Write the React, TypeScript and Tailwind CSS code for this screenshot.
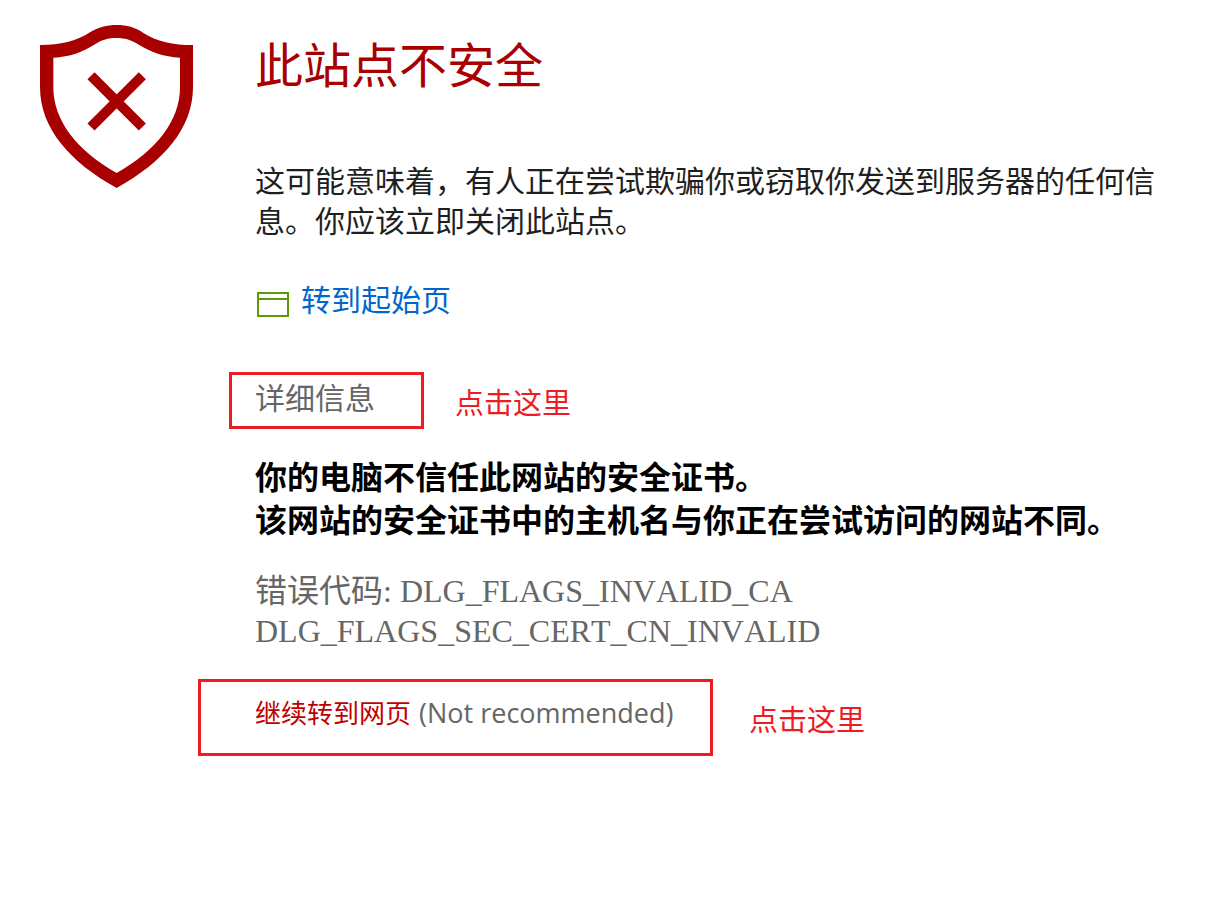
import React from "react";

function ShieldIcon() {
  return (
    <svg viewBox="0 0 459 489" className="h-auto w-[153px]" aria-hidden="true">
      <path
        fill="#a80000"
        fillRule="evenodd"
        d="M0 60C62 60 108 49 150 22C175 7 200 0 230 0C260 0 286 7 309 23C350 50 400 60 459 60V187C459 310 370 412 230 489C90 412 0 310 0 187ZM40 98V187C40 288 112 378 230 444C348 378 420 288 420 187V98C372 96 332 82 294 58C274 45 255 39 230 39C205 39 186 44 165 58C128 82 90 96 40 98Z"
      />
      <path d="M153 152L307 306M307 152L153 306" stroke="#a80000" strokeWidth="30" fill="none" />
    </svg>
  );
}

function WindowIcon() {
  return (
    <svg viewBox="0 0 32 26" className="mt-[11px] h-[26px] w-8" fill="none" stroke="#5c9a0c" aria-hidden="true">
      <path strokeWidth="2" d="M1 2H31V25H1Z" />
      <path strokeWidth="2" d="M1 8H31" />
    </svg>
  );
}

function Hint({ children }: { children: React.ReactNode }) {
  return <p className="text-[29px] leading-10 text-[#ed1c24]">{children}</p>;
}

export default function App() {
  return (
    <main className="flex min-h-screen items-start bg-white pt-[25px] pr-10 pl-10 font-['Noto_Sans_CJK_SC',sans-serif]">
      <div className="w-[215px] shrink-0">
        <ShieldIcon />
      </div>
      <div className="min-w-0 flex-1 pt-[5px]">
        <h1 className="text-[48px] leading-[64px] font-normal text-[#a80000]">此站点不安全</h1>
        <p className="mt-[65px] text-[30px] leading-10 text-[#1f1f1f]">
          这可能意味着，有人正在尝试欺骗你或窃取你发送到服务器的任何信息。你应该立即关闭此站点。
        </p>
        <a href="#start" className="mt-[39px] flex w-fit items-center gap-3 pl-0.5 text-[30px] leading-10 text-[#0066cc]">
          <WindowIcon />
          转到起始页
        </a>
        <div className="mt-[54px] -ml-[26px] flex items-center gap-[31px]">
          <button type="button" className="w-[195px] border-3 border-[#ed1c24] pt-px pb-[10px] pl-[23px] text-left text-[30px] leading-10 text-[#666]">
            详细信息
          </button>
          <Hint>点击这里</Hint>
        </div>
        <p className="mt-[25px] text-[32px] leading-[43px] font-bold text-black">
          你的电脑不信任此网站的安全证书。
          <br />
          该网站的安全证书中的主机名与你正在尝试访问的网站不同。
        </p>
        <p className="mt-[31px] font-['Liberation_Serif','Noto_Sans_CJK_SC',serif] text-[32px] leading-10 text-[#666] [font-kerning:none]">
          错误代码: DLG_FLAGS_INVALID_CA
          <br />
          DLG_FLAGS_SEC_CERT_CN_INVALID
        </p>
        <div className="mt-[28px] -ml-[57px] flex items-center gap-9">
          <div className="flex w-[515px] items-baseline gap-2 border-3 border-[#ed1c24] pt-[10px] pb-[20px] pl-[54px] leading-10 text-[#666]">
            <a href="#continue" className="text-[26px] text-[#c00000]">继续转到网页</a>
            <span className="font-['Open_Sans',sans-serif] text-[27px]">(Not recommended)</span>
          </div>
          <Hint>点击这里</Hint>
        </div>
      </div>
    </main>
  );
}
